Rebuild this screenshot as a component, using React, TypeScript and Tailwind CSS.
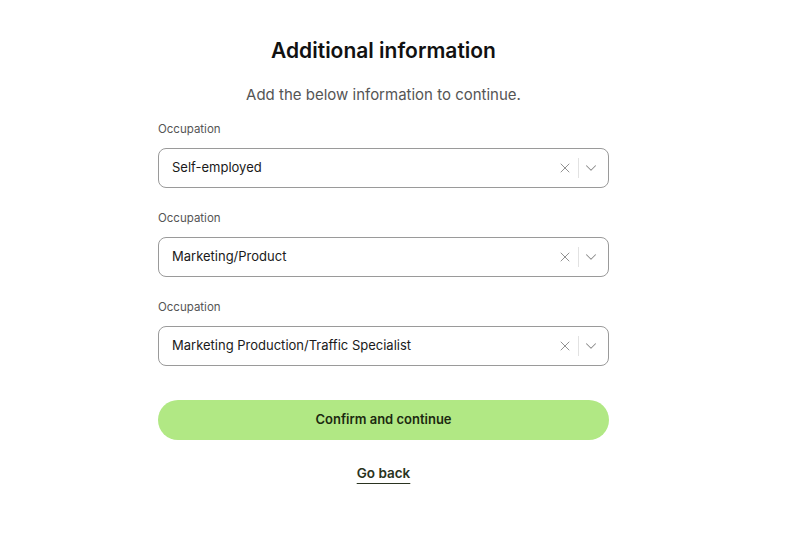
import { ChevronDown, X } from "lucide-react";

const fields = [
  { label: "Occupation", value: "Self-employed" },
  { label: "Occupation", value: "Marketing/Product" },
  { label: "Occupation", value: "Marketing Production/Traffic Specialist" },
];

const SelectField = ({ label, value }: { label: string; value: string }) => {
  return (
    <div className="flex flex-col">
      <label className="text-[11.5px] leading-4 text-[#555]">{label}</label>
      <div className="mt-[11px] flex h-[40px] items-center rounded-lg border border-[#9a9a9a] bg-white pl-[13px] pr-[8px]">
        <span className="flex-1 text-[13px] text-[#1a1a1a]">{value}</span>
        <X className="h-[16px] w-[16px] text-[#8a8a8a]" strokeWidth={1.4} />
        <div className="ml-[5px] mr-[3px] h-[20px] w-px bg-[#e2e2e2]" />
        <ChevronDown className="h-[18px] w-[18px] text-[#8a8a8a]" strokeWidth={1.4} />
      </div>
    </div>
  );
};

export default function App() {
  return (
    <div
      className="flex min-h-screen justify-center bg-white pr-[33px] pt-[37px]"
      style={{ fontFamily: "Inter, 'Noto Sans', sans-serif" }}
    >
      <div className="flex w-[451px] flex-col">
        <h1 className="text-center text-[21px] leading-7 font-semibold text-[#111]">
          Additional information
        </h1>
        <p className="mt-[20px] text-center text-[15px] leading-5 text-[#555]">
          Add the below information to continue.
        </p>
        <div className="mt-[16px] flex flex-col gap-[22px]">
          {fields.map((f, i) => (
            <SelectField key={i} label={f.label} value={f.value} />
          ))}
        </div>
        <button className="mt-[34px] h-[40px] rounded-full bg-[#b1e884] text-[13px] font-semibold text-[#1c2a10]">
          Confirm and continue
        </button>
        <div className="mt-[23px] flex justify-center">
          <a
            href="#"
            className="text-[13.5px] font-semibold text-[#2a3320] underline decoration-[#2a3320] underline-offset-[5px]"
          >
            Go back
          </a>
        </div>
      </div>
    </div>
  );
}
